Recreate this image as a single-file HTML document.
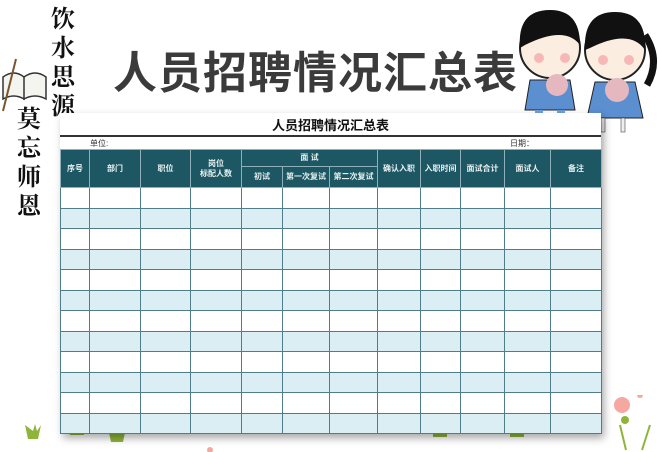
<!DOCTYPE html>
<html><head><meta charset="utf-8"><style>
*{margin:0;padding:0;box-sizing:border-box}
body{width:658px;height:452px;background:#fff;position:relative;overflow:hidden;font-family:"Liberation Sans","Noto Sans CJK SC",sans-serif}
.poem{position:absolute;font-family:"Liberation Serif","Noto Serif CJK SC",serif;font-weight:bold;font-size:24px;color:#111;line-height:29px;width:30px;text-align:center}
.big{position:absolute;left:113px;top:46px;font-size:44px;font-weight:bold;color:#3b3b3b;letter-spacing:1px;white-space:nowrap;line-height:56px}
.sheet{position:absolute;left:60px;top:113px;width:541px;height:321px;background:#fff;box-shadow:3px 4px 8px rgba(0,0,0,.35)}
.t{position:absolute;left:0;top:0;width:541px;height:24px;text-align:center;font-size:13px;font-weight:bold;line-height:26px;color:#111;border-bottom:2px solid #333}
.u{position:absolute;top:25px;font-size:8px;color:#333}
table{position:absolute;left:0;top:36px;border-collapse:collapse;width:541px;table-layout:fixed}
td,th{border:1px solid #4f7d8a;font-size:8px;font-weight:bold}
th{background:#1d5763;color:#e8f0f0;text-align:center;border-color:#8fb0b8;line-height:10px}
td{height:20.5px}
tr.b td{background:#dbeef3}
</style></head><body>
<div class="poem" style="left:48px;top:6px">饮<br>水<br>思<br>源</div>
<div class="poem" style="left:14px;top:106px">莫<br>忘<br>师<br>恩</div>
<svg style="position:absolute;left:0;top:55px" width="50" height="60"><path d="M3 22 Q14 14 24 22 L24 44 Q14 38 3 44Z M24 22 Q35 14 46 22 L46 44 Q35 38 24 44Z" fill="#f5f5f0" stroke="#333" stroke-width="1.5"/><line x1="16" y1="4" x2="3" y2="56" stroke="#7a5530" stroke-width="2"/></svg>
<div class="big">人员招聘情况汇总表</div>
<svg style="position:absolute;left:505px;top:0" width="153" height="135">
<ellipse cx="45" cy="48" rx="30" ry="30" fill="#fbeee0" stroke="#222" stroke-width="2"/>
<path d="M15 48 Q12 10 45 10 Q75 10 75 45 Q60 25 20 45Z" fill="#111"/>
<ellipse cx="110" cy="50" rx="30" ry="30" fill="#fbeee0" stroke="#222" stroke-width="2"/>
<path d="M80 50 Q78 12 110 12 Q142 12 140 50 Q125 28 85 48Z" fill="#111"/>
<path d="M140 35 Q156 60 142 85" stroke="#111" stroke-width="7" fill="none"/>
<circle cx="34" cy="58" r="5" fill="#f7b7b7"/><circle cx="60" cy="58" r="5" fill="#f7b7b7"/>
<circle cx="98" cy="60" r="5" fill="#f7b7b7"/><circle cx="124" cy="60" r="5" fill="#f7b7b7"/>
<path d="M25 80 L65 80 L70 110 L20 110Z" fill="#5b8fd0" stroke="#222"/>
<path d="M90 82 L130 82 L138 118 L82 118Z" fill="#5b8fd0" stroke="#222"/>
<circle cx="52" cy="85" r="11" fill="#e5b8bf"/><circle cx="112" cy="90" r="12" fill="#e5b8bf"/>
<rect x="30" y="110" width="8" height="18" fill="#6fa0d8"/><rect x="52" y="110" width="8" height="18" fill="#6fa0d8"/>
<rect x="96" y="118" width="4" height="14" fill="#eee" stroke="#222" stroke-width=".5"/><rect x="116" y="118" width="4" height="14" fill="#eee" stroke="#222" stroke-width=".5"/>
</svg>
<svg style="position:absolute;left:0;top:395px" width="658" height="57">
<g fill="#8fb43a"><path d="M25 30 l3 14 h10 l3 -14 l-4 6 l-2 -7 l-2 7z"/><path d="M108 33 l3 14 h12 l3 -14 l-4 6 l-3 -7 l-3 7z"/><path d="M433 30 h14 v12 h-14z"/><path d="M510 30 h14 v12 h-14z"/><path d="M70 30 h14 v10 h-14z"/></g>
<path d="M620 30 l6 25 M650 30 l-8 25" stroke="#8fb43a" stroke-width="2"/>
<circle cx="622" cy="10" r="8" fill="#f5a8a0"/><circle cx="625" cy="25" r="4" fill="#8fb43a"/>
<circle cx="210" cy="55" r="3" fill="#f5a8a0"/><circle cx="640" cy="0" r="3" fill="#f5a8a0"/>
</svg>
<div class="sheet">
<div class="t">人员招聘情况汇总表</div>
<div class="u" style="left:30px">单位:</div>
<div class="u" style="left:450px">日期：</div>
<table>
<colgroup><col style="width:29px"><col style="width:51px"><col style="width:50px"><col style="width:51px"><col style="width:41px"><col style="width:47px"><col style="width:48px"><col style="width:43px"><col style="width:40px"><col style="width:44px"><col style="width:46px"><col style="width:51px"></colgroup>
<tr style="height:17px"><th rowspan="2">序号</th><th rowspan="2">部门</th><th rowspan="2">职位</th><th rowspan="2">岗位<br>标配人数</th><th colspan="3">面 试</th><th rowspan="2">确认入职</th><th rowspan="2">入职时间</th><th rowspan="2">面试合计</th><th rowspan="2">面试人</th><th rowspan="2">备注</th></tr>
<tr style="height:21px"><th>初试</th><th>第一次复试</th><th>第二次复试</th></tr>
<tr><td></td><td></td><td></td><td></td><td></td><td></td><td></td><td></td><td></td><td></td><td></td><td></td></tr>
<tr class="b"><td></td><td></td><td></td><td></td><td></td><td></td><td></td><td></td><td></td><td></td><td></td><td></td></tr>
<tr><td></td><td></td><td></td><td></td><td></td><td></td><td></td><td></td><td></td><td></td><td></td><td></td></tr>
<tr class="b"><td></td><td></td><td></td><td></td><td></td><td></td><td></td><td></td><td></td><td></td><td></td><td></td></tr>
<tr><td></td><td></td><td></td><td></td><td></td><td></td><td></td><td></td><td></td><td></td><td></td><td></td></tr>
<tr class="b"><td></td><td></td><td></td><td></td><td></td><td></td><td></td><td></td><td></td><td></td><td></td><td></td></tr>
<tr><td></td><td></td><td></td><td></td><td></td><td></td><td></td><td></td><td></td><td></td><td></td><td></td></tr>
<tr class="b"><td></td><td></td><td></td><td></td><td></td><td></td><td></td><td></td><td></td><td></td><td></td><td></td></tr>
<tr><td></td><td></td><td></td><td></td><td></td><td></td><td></td><td></td><td></td><td></td><td></td><td></td></tr>
<tr class="b"><td></td><td></td><td></td><td></td><td></td><td></td><td></td><td></td><td></td><td></td><td></td><td></td></tr>
<tr><td></td><td></td><td></td><td></td><td></td><td></td><td></td><td></td><td></td><td></td><td></td><td></td></tr>
<tr class="b"><td></td><td></td><td></td><td></td><td></td><td></td><td></td><td></td><td></td><td></td><td></td><td></td></tr>
</table>
</div>
</body></html>
